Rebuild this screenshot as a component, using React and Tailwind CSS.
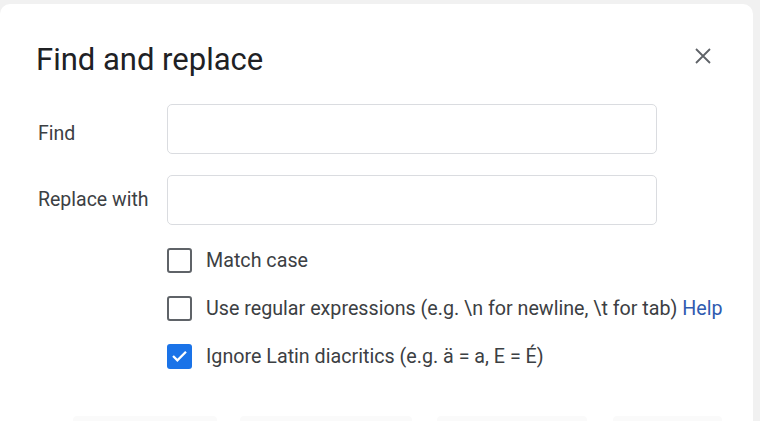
import React, { useState } from "react";

const font = { fontFamily: "Roboto, 'Liberation Sans', sans-serif" };

function Checkbox({ checked, onChange }) {
  return (
    <button
      type="button"
      onClick={onChange}
      className={
        checked
          ? "w-[25px] h-[25px] rounded-[3px] bg-[#1a73e8] flex items-center justify-center shrink-0"
          : "w-[25px] h-[25px] rounded-[3px] border-2 border-[#5f6368] bg-white shrink-0"
      }
    >
      {checked && (
        <svg width="17" height="17" viewBox="0 0 24 24" fill="none">
          <path d="M4 12.5l5 5L20 6.5" stroke="white" strokeWidth="3.2" strokeLinecap="square" />
        </svg>
      )}
    </button>
  );
}

export default function App() {
  const [find, setFind] = useState("");
  const [replace, setReplace] = useState("");
  const [matchCase, setMatchCase] = useState(false);
  const [regex, setRegex] = useState(false);
  const [ignoreLatin, setIgnoreLatin] = useState(true);

  return (
    <div className="w-[760px] h-[421px] bg-[#f1f1f1] pt-[4px] pr-[7px] overflow-hidden" style={font}>
      <div className="h-full bg-white rounded-t-[10px] pl-[36px] pt-[38px] flex flex-col">
        {/* Titulo */}
        <div className="flex items-start h-[36px]">
          <h1 className="text-[31px] leading-[36px] text-[#202124] flex-1">Find and replace</h1>
          <button type="button" className="mr-[42px] mt-[6px] w-[16px] h-[16px] flex items-center justify-center">
            <svg width="16" height="16" viewBox="0 0 16 16">
              <path d="M1 1L15 15M15 1L1 15" stroke="#5f6368" strokeWidth="1.8" />
            </svg>
          </button>
        </div>

        {/* Campos */}
        <div className="mt-[26px] flex flex-col gap-[21px]">
          <div className="flex items-center">
            <label className="w-[131px] pl-[2px] mt-[9px] text-[19.5px] leading-[24px] text-[#3c4043]">Find</label>
            <input
              value={find}
              onChange={(e) => setFind(e.target.value)}
              className="w-[490px] h-[50px] border border-[#dadce0] rounded-[5px] px-3 outline-none"
            />
          </div>
          <div className="flex items-center">
            <label className="w-[131px] pl-[2px] text-[19.5px] leading-[24px] text-[#3c4043]">Replace with</label>
            <input
              value={replace}
              onChange={(e) => setReplace(e.target.value)}
              className="w-[490px] h-[50px] border border-[#dadce0] rounded-[5px] px-3 outline-none"
            />
          </div>
        </div>

        {/* Opciones */}
        <div className="mt-[23px] ml-[131px] flex flex-col gap-[23px] text-[19.7px] leading-[24px] text-[#3c4043]">
          <div className="flex items-center gap-[14px]">
            <Checkbox checked={matchCase} onChange={() => setMatchCase(!matchCase)} />
            <span>Match case</span>
          </div>
          <div className="flex items-center gap-[14px]">
            <Checkbox checked={regex} onChange={() => setRegex(!regex)} />
            <span>
              Use regular expressions (e.g. \n for newline, \t for tab){" "}
              <a className="text-[#2f5bb0]">Help</a>
            </span>
          </div>
          <div className="flex items-center gap-[14px]">
            <Checkbox checked={ignoreLatin} onChange={() => setIgnoreLatin(!ignoreLatin)} />
            <span>Ignore Latin diacritics (e.g. ä = a, E = É)</span>
          </div>
        </div>

        {/* Botones (cortados) */}
        <div className="mt-auto flex h-[5px] -ml-[36px]">
          <div className="ml-[73px] w-[144px] bg-[#fafafa] rounded-t-[4px]" />
          <div className="ml-[23px] w-[172px] bg-[#fafafa] rounded-t-[4px]" />
          <div className="ml-[25px] w-[150px] bg-[#fafafa] rounded-t-[4px]" />
          <div className="ml-[26px] w-[109px] bg-[#fafafa] rounded-t-[4px]" />
        </div>
      </div>
    </div>
  );
}
